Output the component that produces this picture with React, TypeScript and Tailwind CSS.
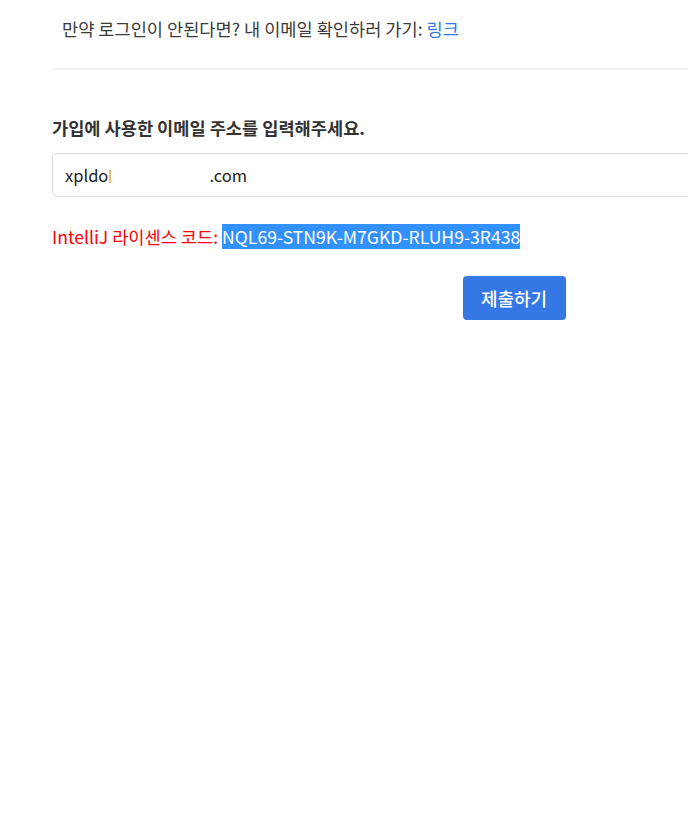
import React from "react";

export default function App() {
  return (
    <div
      className="w-full min-h-[830px] bg-white overflow-hidden"
      style={{ fontFamily: '"Noto Sans CJK KR", "Noto Sans", sans-serif' }}
    >
      <div className="ml-[52px] w-[924px]">
        <div className="pl-[10px] pt-[16px] h-[70px] text-[17.6px] leading-[26px] text-[#3b3b3b] border-b-2 border-[#f4f4f4]">
          만약 로그인이 안된다면? 내 이메일 확인하러 가기:{" "}
          <a className="text-[#3578e5]" href="#">
            링크
          </a>
        </div>
        <div className="pt-[45px] text-[17.6px] leading-[26px] font-bold text-[#333]">
          가입에 사용한 이메일 주소를 입력해주세요.
        </div>
        <div className="mt-[12px] h-[44px] border border-[#dcdcdc] rounded-[5px] flex items-center pl-[12px] text-[16.5px] text-[#222]">
          <span>xpldo</span>
          <span className="inline-block w-[2px] h-[13px] mt-[3px] ml-[1px] bg-[#e8a040] opacity-70"></span>
          <span className="inline-block w-[98px]"></span>
          <span>.com</span>
        </div>
        <div className="mt-[27px] text-[17.6px] leading-[26px] text-[#ff0000]">
          IntelliJ 라이센스 코드:{" "}
          <span className="bg-[#3390ff] text-white">NQL69-STN9K-M7GKD-RLUH9-3R438</span>
        </div>
        <div className="mt-[26px] flex justify-center">
          <button className="h-[44px] w-[103px] rounded-[4px] bg-[#3578e5] text-white text-[18px] font-medium">
            제출하기
          </button>
        </div>
      </div>
    </div>
  );
}
